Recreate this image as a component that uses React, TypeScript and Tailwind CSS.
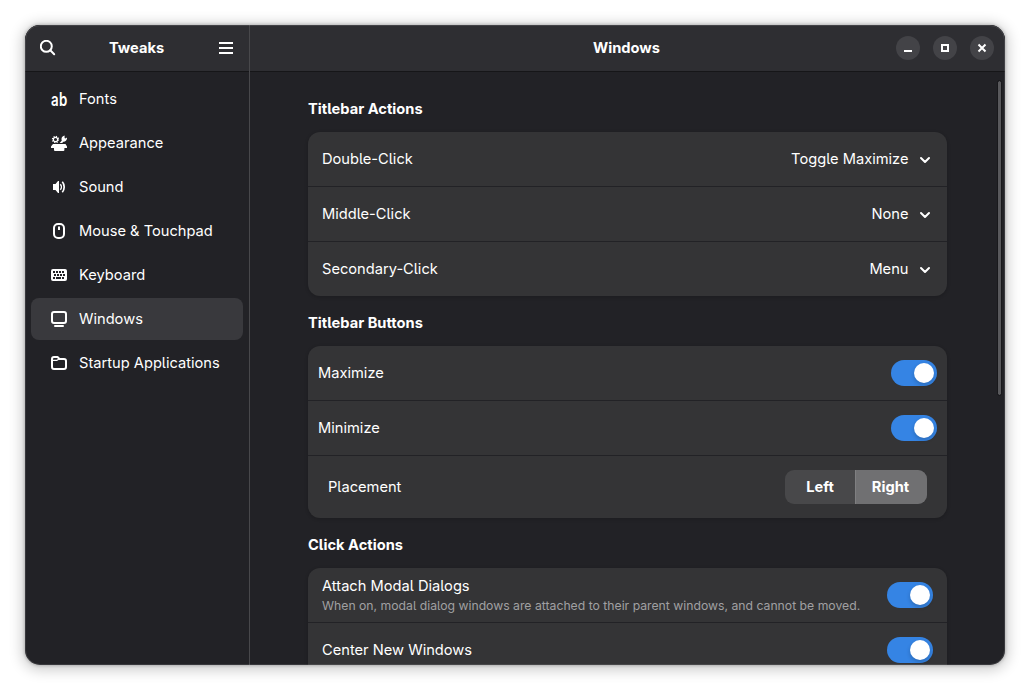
import React, { useState } from "react";

type IconProps = { className?: string };

const base = "h-4 w-4 shrink-0 text-white";

function FontsIcon() {
  return (
    <span aria-hidden className="flex h-4 w-4 shrink-0 items-center justify-center">
      <span className="mt-px block origin-center scale-x-[0.74] text-[18px] leading-[22px] font-semibold tracking-[0.5px]">
        ab
      </span>
    </span>
  );
}

function AppearanceIcon({ className = base }: IconProps) {
  return (
    <svg viewBox="0 0 16 16" className={className} fill="currentColor">
      <circle cx="4.500" cy="4.500" r="2.100" fill="none" stroke="currentColor" strokeWidth="1.100" />
      <circle cx="4.500" cy="4.500" r="3.100" fill="none" stroke="currentColor" strokeWidth="1.100" strokeDasharray="1.200 1.235" />
      <path d="M8.700 8 10.800 5.600C9.800 3.200 11.300 .8 13.600 .4V2.900L14.400 3.600 16 2.400C16.300 5.200 14.500 7 12.300 6.800L11.200 8Z" />
      <path d="M2 9h12.500L16 11.500V13h-2.600v2a1 1 0 0 1-1 1H4a1 1 0 0 1-1-1v-2H0v-1.500Z" />
    </svg>
  );
}

function SoundIcon({ className = base }: IconProps) {
  return (
    <svg viewBox="0 0 16 16" className={className} fill="currentColor">
      <path d="M2 5h2.500L7 2h1v12H7L4.500 11H2Z" />
      <path d="M9.300 5.200c1.400 1.500 1.400 4.100 0 5.600" fill="none" stroke="currentColor" strokeWidth="1.500" />
      <path d="M11.300 2.800c2.500 2.800 2.500 7.600 0 10.400" fill="none" stroke="currentColor" strokeWidth="1.700" />
    </svg>
  );
}

function MouseIcon({ className = base }: IconProps) {
  return (
    <svg viewBox="0 0 16 16" className={className} fill="none" stroke="currentColor" strokeWidth="2">
      <rect x="3" y="1" width="10" height="14" rx="4" />
      <path d="M8 3.500v3.500" />
    </svg>
  );
}

function KeyboardIcon({ className = base }: IconProps) {
  return (
    <svg viewBox="0 0 16 16" className={className} fill="currentColor">
      <path
        fillRule="evenodd"
        d="M2 2h12a2 2 0 0 1 2 2v8a2 2 0 0 1-2 2H2a2 2 0 0 1-2-2V4a2 2 0 0 1 2-2ZM2 4v2h2V4ZM5 4v2h2V4ZM8 4v2h2V4ZM11 4v2h2V4ZM3 7v2h2V7ZM6 7v2h2V7ZM9 7v2h2V7ZM12 7v2h2V7ZM2 10v2h2v-2ZM5 10v2h5v-2ZM11 10v2h2v-2Z"
      />
    </svg>
  );
}

function WindowsIcon({ className = base }: IconProps) {
  return (
    <svg viewBox="0 0 16 16" className={className} fill="none" stroke="currentColor" strokeWidth="2">
      <rect x="1" y="1" width="14" height="11" rx="2" />
      <path d="M4 15h8" strokeLinecap="round" />
    </svg>
  );
}

function FolderIcon({ className = base }: IconProps) {
  return (
    <svg viewBox="0 0 16 16" className={className} fill="none" stroke="currentColor" strokeWidth="2" strokeLinejoin="round">
      <path d="M1 12V4A2 2 0 0 1 3 2H6.500l2 2H13A2 2 0 0 1 15 6v6a2 2 0 0 1-2 2H3A2 2 0 0 1 1 12Z" />
      <path d="M1 5.300h5L8 4" strokeWidth="1.200" />
    </svg>
  );
}

const pages: { name: string; Icon: (p: IconProps) => React.ReactElement }[] = [
  { name: "Fonts", Icon: FontsIcon },
  { name: "Appearance", Icon: AppearanceIcon },
  { name: "Sound", Icon: SoundIcon },
  { name: "Mouse & Touchpad", Icon: MouseIcon },
  { name: "Keyboard", Icon: KeyboardIcon },
  { name: "Windows", Icon: WindowsIcon },
  { name: "Startup Applications", Icon: FolderIcon },
];

function Switch() {
  const [on, setOn] = useState(true);
  return (
    <button
      role="switch"
      aria-checked={on}
      onClick={() => setOn(!on)}
      className={`flex h-[26px] w-[46px] shrink-0 items-center rounded-full px-[3px] ${on ? "justify-end bg-[#3584e4]" : "justify-start bg-[#5a5a5c]"}`}
    >
      <span className="h-5 w-5 rounded-full bg-white shadow-[0_2px_4px_rgba(0,0,0,0.2)]" />
    </button>
  );
}

function Group({ title, children }: { title: string; children: React.ReactNode }) {
  return (
    <section>
      <h2 className="flex h-[50px] items-center pt-1 font-bold tracking-[0.02px]">{title}</h2>
      <div className="divide-y divide-[#222226] overflow-hidden rounded-xl bg-[#343436] shadow-[0_1px_3px_1px_rgba(0,0,0,0.12)]">
        {children}
      </div>
    </section>
  );
}

function ChoiceRow({ label, value }: { label: string; value: string }) {
  return (
    <div className="box-content flex h-[54px] items-center px-3.5">
      <span className="flex-1">{label}</span>
      <span>{value}</span>
      <svg viewBox="0 0 16 16" className="ml-[8.500px] h-4 w-4" fill="none" stroke="currentColor" strokeWidth="2" strokeLinecap="round" strokeLinejoin="round">
        <path d="m4 7 4 4 4-4" />
      </svg>
    </div>
  );
}

function WindowButton({ children }: { children: React.ReactNode }) {
  return (
    <button className="flex h-6 w-6 items-center justify-center rounded-full bg-[#434347]">
      <svg viewBox="0 0 16 16" className="h-4 w-4" fill="none" stroke="currentColor" strokeWidth="2">
        {children}
      </svg>
    </button>
  );
}

export default function App() {
  const [placement, setPlacement] = useState("Right");
  return (
    <div className="h-[690px] w-[1030px] overflow-hidden bg-white p-[25px] font-['Inter',sans-serif] text-[14.667px] leading-[18px] text-white [font-feature-settings:'cv05'_1]">
      <div className="relative flex h-[640px] w-[980px] overflow-hidden rounded-[15px] bg-[#222226] shadow-[0_0_3px_1px_rgba(0,0,0,0.18),0_2px_14px_3px_rgba(0,0,0,0.2)]">
        <aside className="flex w-[225px] shrink-0 flex-col border-r border-[#48484b]">
          <header className="flex h-[46px] shrink-0 items-center justify-between bg-[#2e2e32] px-[15px] shadow-[0_1px_rgba(0,0,0,0.35)]">
            <svg viewBox="0 0 16 16" className="h-4 w-4" fill="none" stroke="currentColor" strokeWidth="2">
              <circle cx="6.300" cy="6.300" r="5.500" />
              <path d="m10.300 10.300 3.900 3.900" strokeLinecap="round" />
            </svg>
            <h1 className="pr-px font-bold">Tweaks</h1>
            <svg viewBox="0 0 16 16" className="h-4 w-4" fill="none" stroke="currentColor" strokeWidth="2">
              <path d="M1 3h14M1 8h14M1 13h14" />
            </svg>
          </header>
          <nav className="mt-[7px] flex flex-col gap-0.5 px-1.5">
            {pages.map(({ name, Icon }) => (
              <a
                key={name}
                className={`flex h-[42px] items-center gap-3 rounded-lg pl-5 ${name === "Windows" ? "bg-[#39393d]" : ""}`}
              >
                <Icon />
                <span>{name}</span>
              </a>
            ))}
          </nav>
        </aside>
        <main className="flex min-w-0 flex-1 flex-col">
          <header className="flex h-[46px] shrink-0 items-center bg-[#2e2e32] pr-[11px] shadow-[0_1px_rgba(0,0,0,0.35)]">
            <h1 className="flex-1 pl-[107px] text-center font-bold">Windows</h1>
            <div className="flex gap-[13px]">
              <WindowButton>
                <path d="M4 11h8" />
              </WindowButton>
              <WindowButton>
                <rect x="5" y="5" width="6" height="6" />
              </WindowButton>
              <WindowButton>
                <path d="m4.500 4.500 7 7m0-7-7 7" />
              </WindowButton>
            </div>
          </header>
          <div className="flex min-h-0 flex-1 overflow-hidden">
            <div className="ml-[58px] mt-[11px] w-[639px]">
              <Group title="Titlebar Actions">
                <ChoiceRow label="Double-Click" value="Toggle Maximize" />
                <ChoiceRow label="Middle-Click" value="None" />
                <ChoiceRow label="Secondary-Click" value="Menu" />
              </Group>
              <Group title="Titlebar Buttons">
                <div className="box-content flex h-[54px] items-center justify-between px-2.5">
                  <span>Maximize</span>
                  <Switch />
                </div>
                <div className="box-content flex h-[54px] items-center justify-between px-2.5">
                  <span>Minimize</span>
                  <Switch />
                </div>
                <div className="box-content flex h-[62px] items-center justify-between px-5">
                  <span>Placement</span>
                  <div className="flex h-[34px] overflow-hidden rounded-[9px] bg-[#48484a] font-bold">
                    {["Left", "Right"].map((side) => (
                      <button
                        key={side}
                        onClick={() => setPlacement(side)}
                        className={`${side === "Left" ? "w-[70px]" : "w-[72px] border-l border-[#7f7f81] pr-0.5"} ${placement === side ? "bg-[#707072]" : ""}`}
                      >
                        {side}
                      </button>
                    ))}
                  </div>
                </div>
              </Group>
              <Group title="Click Actions">
                <div className="box-content flex h-[54px] items-center justify-between px-3.5">
                  <div className="flex flex-col gap-[3px]">
                    <span>Attach Modal Dialogs</span>
                    <span className="text-[12.23px] leading-4 whitespace-nowrap text-[#a0a0a2]">
                      When on, modal dialog windows are attached to their parent windows, and cannot be moved.
                    </span>
                  </div>
                  <Switch />
                </div>
                <div className="box-content flex h-[54px] items-center justify-between px-3.5">
                  <span>Center New Windows</span>
                  <Switch />
                </div>
              </Group>
            </div>
            <div className="ml-auto mr-1 mt-[10px] h-[314px] w-[3px] rounded-full bg-[#59595c] outline outline-1 outline-[#19191c]" />
          </div>
        </main>
        <div className="pointer-events-none absolute inset-0 rounded-[15px] border border-white/10" />
      </div>
    </div>
  );
}
